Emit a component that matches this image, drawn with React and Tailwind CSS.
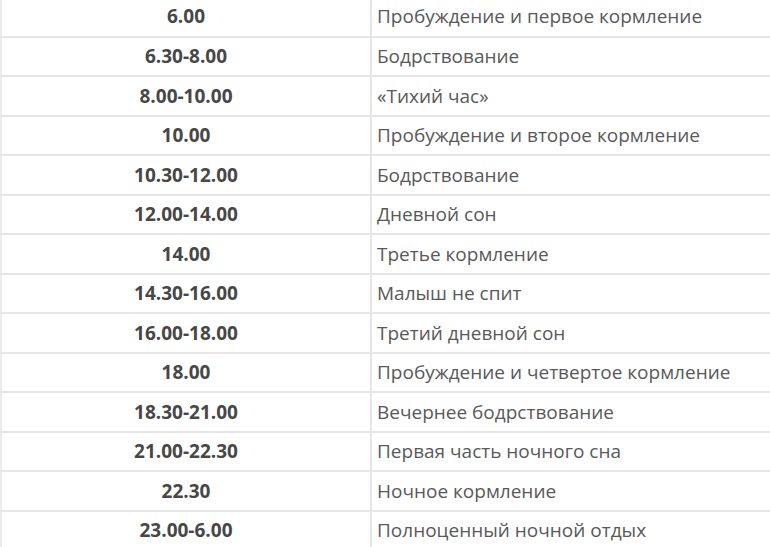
const rows = [
  ["6.00", "Пробуждение и первое кормление"],
  ["6.30-8.00", "Бодрствование"],
  ["8.00-10.00", "«Тихий час»"],
  ["10.00", "Пробуждение и второе кормление"],
  ["10.30-12.00", "Бодрствование"],
  ["12.00-14.00", "Дневной сон"],
  ["14.00", "Третье кормление"],
  ["14.30-16.00", "Малыш не спит"],
  ["16.00-18.00", "Третий дневной сон"],
  ["18.00", "Пробуждение и четвертое кормление"],
  ["18.30-21.00", "Вечернее бодрствование"],
  ["21.00-22.30", "Первая часть ночного сна"],
  ["22.30", "Ночное кормление"],
  ["23.00-6.00", "Полноценный ночной отдых"],
];

export default function App() {
  return (
    <div
      className="w-[770px] h-[547px] overflow-hidden bg-white"
      style={{ fontFamily: '"Open Sans", "Noto Sans", sans-serif' }}
    >
      <table className="-mt-[3px] w-[770px] border-collapse border-l-2 border-[#ececec] table-fixed">
        <tbody>
          {rows.map(([time, text]) => (
            <tr key={time} className="h-[39.5px] border-b-2 border-[#e6e6e6]">
              <td className="w-[370px] text-center text-[19px] font-bold text-[#474747] border-r-2 border-[#e6e6e6] p-0">
                {time}
              </td>
              <td className="pl-[5px] text-[19px] text-[#595959] p-0">{text}</td>
            </tr>
          ))}
        </tbody>
      </table>
    </div>
  );
}
